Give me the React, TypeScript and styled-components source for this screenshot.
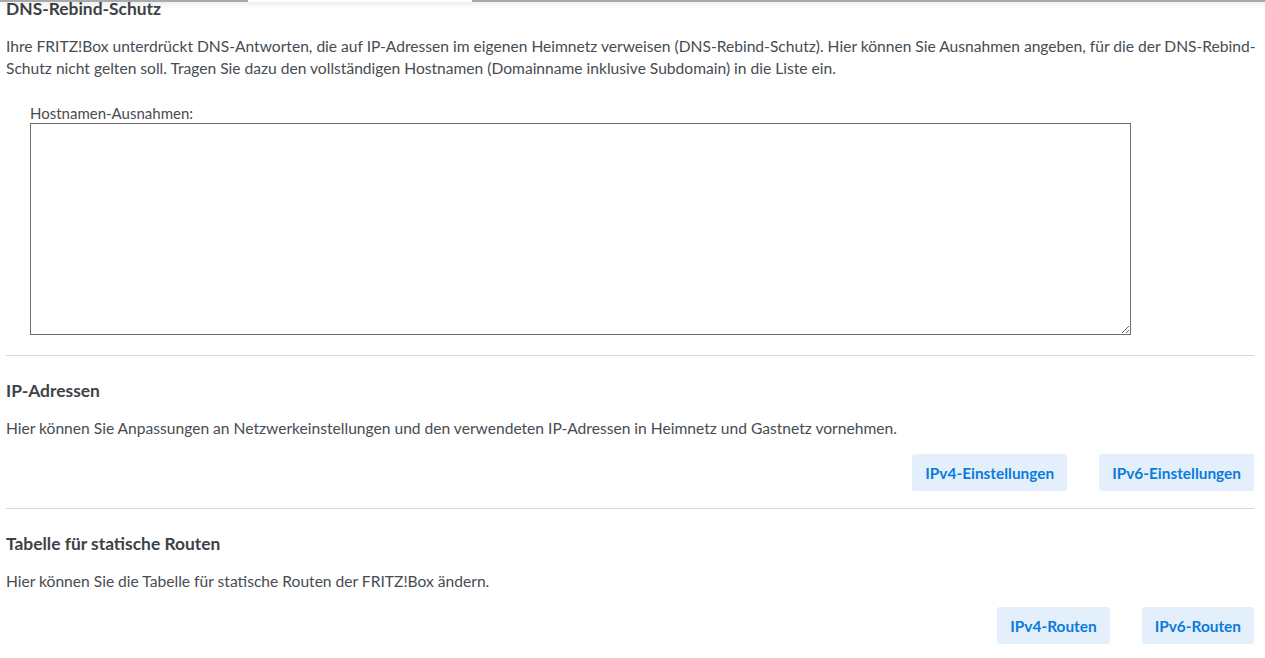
import styled, { createGlobalStyle } from 'styled-components';

const GlobalStyle = createGlobalStyle`
  html, body {
    margin: 0;
    padding: 0;
    background: #ffffff;
    overflow: hidden;
  }
  body {
    font-family: Lato, "Noto Sans", "Liberation Sans", sans-serif;
    color: #4a4f55;
  }
`;

const HeaderEdge = styled.div`
  position: fixed;
  top: 0;
  left: 0;
  right: 0;
  height: 2px;
  background: #a7abae;
  box-shadow: 0 1px 6px rgba(0, 0, 0, 0.22);
  z-index: 10;
`;

const ActiveTab = styled.div`
  position: absolute;
  top: 0;
  left: 248px;
  width: 224px;
  height: 2px;
  background: #ffffff;
`;

const Page = styled.main`
  padding: 0 11px 0 6px;
  margin-top: -3px;
`;

const Section = styled.section<{ $first?: boolean }>`
  padding-top: ${(p) => (p.$first ? '0' : '23px')};
  padding-bottom: 17px;
  border-bottom: 1px solid #d6d6d6;

  &:last-child {
    border-bottom: none;
  }
`;

const Heading = styled.h2`
  margin: 0 0 14px 0;
  font-size: 17.4px;
  line-height: 24px;
  font-weight: 700;
  color: #3d4246;
`;

const Text = styled.p`
  margin: 0;
  font-size: 15.6px;
  line-height: 22px;
  color: #474c52;
  white-space: nowrap;
`;

const Field = styled.div`
  padding: 24px 0 3px 24px;
  display: flex;
  flex-direction: column;
`;

const Label = styled.label`
  font-size: 15px;
  line-height: 20px;
  color: #474c52;
`;

const Area = styled.textarea`
  box-sizing: border-box;
  width: 1101px;
  height: 212px;
  margin: 0;
  border: 1px solid #6e6e6e;
  border-radius: 0;
  font-family: inherit;
  font-size: 15px;
  padding: 4px;
  background: #ffffff;
  outline: none;
`;

const ButtonRow = styled.div`
  display: flex;
  justify-content: flex-end;
  gap: 32px;
  margin-top: 15px;
`;

const Button = styled.button`
  height: 37px;
  padding: 0 13px;
  border: none;
  border-radius: 3px;
  background: #e3effb;
  color: #0b7bdc;
  font-family: inherit;
  font-size: 15.4px;
  font-weight: 700;
  cursor: pointer;
`;

export default function App() {
  return (
    <>
      <GlobalStyle />
      <HeaderEdge>
        <ActiveTab />
      </HeaderEdge>
      <Page>
        <Section $first>
          <Heading>DNS-Rebind-Schutz</Heading>
          <Text>
            Ihre FRITZ!Box unterdrückt DNS-Antworten, die auf IP-Adressen im eigenen Heimnetz verweisen (DNS-Rebind-Schutz). Hier können Sie Ausnahmen angeben, für die der DNS-Rebind-
            <br />
            Schutz nicht gelten soll. Tragen Sie dazu den vollständigen Hostnamen (Domainname inklusive Subdomain) in die Liste ein.
          </Text>
          <Field>
            <Label htmlFor="rebind">Hostnamen-Ausnahmen:</Label>
            <Area id="rebind" />
          </Field>
        </Section>
        <Section>
          <Heading>IP-Adressen</Heading>
          <Text>
            Hier können Sie Anpassungen an Netzwerkeinstellungen und den verwendeten IP-Adressen in Heimnetz und Gastnetz vornehmen.
          </Text>
          <ButtonRow>
            <Button>IPv4-Einstellungen</Button>
            <Button>IPv6-Einstellungen</Button>
          </ButtonRow>
        </Section>
        <Section>
          <Heading>Tabelle für statische Routen</Heading>
          <Text>Hier können Sie die Tabelle für statische Routen der FRITZ!Box ändern.</Text>
          <ButtonRow>
            <Button>IPv4-Routen</Button>
            <Button>IPv6-Routen</Button>
          </ButtonRow>
        </Section>
      </Page>
    </>
  );
}
